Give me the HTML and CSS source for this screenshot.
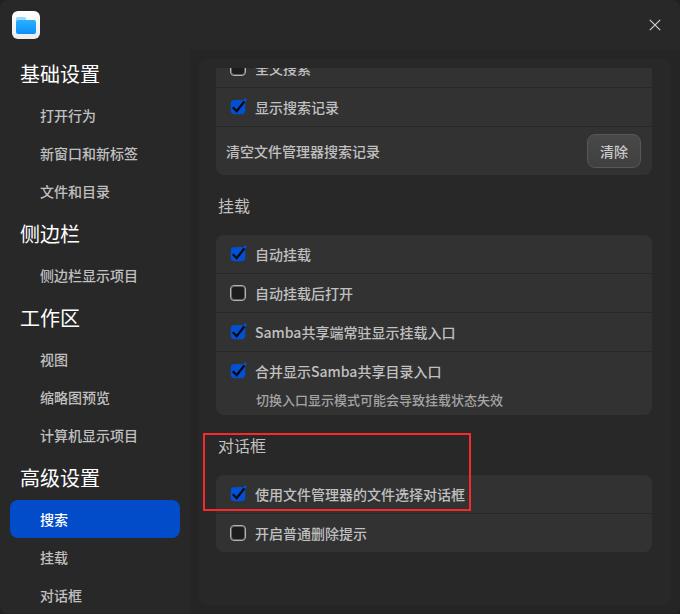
FILE: index.html
```
<!DOCTYPE html>
<html lang="zh-CN">
<head>
    <meta charset="UTF-8">
    <meta name="viewport" content="width=device-width, initial-scale=1.0">
    <title>设置</title>
    <link rel="stylesheet" href="styles.css">
</head>
<body>
    <svg class="sprite" aria-hidden="true">
        <symbol id="tick" viewBox="0 0 18 18">
            <rect x="1.700" y="2" width="14.600" height="14.300" rx="4" fill="#024fcf"/>
            <path d="M14 4.500 16.400 1.700" stroke="#024fcf" stroke-width="2.600" stroke-linecap="round"/>
            <path d="M3.800 9.200 7.700 13.200 15.300 3.500" fill="none" stroke="#02060f" stroke-width="2.200"/>
        </symbol>
    </svg>

    <div class="window">
        <header class="titlebar">
            <svg class="logo" viewBox="0 0 28 28">
                <defs>
                    <linearGradient id="tile" x1="0" y1="0" x2="0" y2="1">
                        <stop offset="0" stop-color="#ffffff"/>
                        <stop offset="1" stop-color="#ececee"/>
                    </linearGradient>
                    <linearGradient id="folder" x1="0" y1="0" x2="0" y2="1">
                        <stop offset="0" stop-color="#2bb0ff"/>
                        <stop offset="1" stop-color="#0a90fb"/>
                    </linearGradient>
                </defs>
                <rect width="28" height="28" rx="6" fill="url(#tile)"/>
                <path d="M4 12V7.500Q4 6 5.500 6H12.500Q14 6 14 7.500V12Z" fill="#94dbff"/>
                <rect x="4" y="9" width="20" height="14" rx="2" fill="url(#folder)"/>
            </svg>
            <button class="close" type="button" aria-label="关闭">
                <svg viewBox="0 0 12 12"><path d="M.8.8 11.200 11.200M11.200.8.8 11.200" stroke="#cfcfcf" stroke-width="1.200"/></svg>
            </button>
        </header>

        <div class="body">
            <nav class="sidebar">
                <h2 class="nav-title">基础设置</h2>
                <a href="#" class="nav-item">打开行为</a>
                <a href="#" class="nav-item">新窗口和新标签</a>
                <a href="#" class="nav-item">文件和目录</a>
                <h2 class="nav-title">侧边栏</h2>
                <a href="#" class="nav-item">侧边栏显示项目</a>
                <h2 class="nav-title">工作区</h2>
                <a href="#" class="nav-item">视图</a>
                <a href="#" class="nav-item">缩略图预览</a>
                <a href="#" class="nav-item">计算机显示项目</a>
                <h2 class="nav-title">高级设置</h2>
                <a href="#" class="nav-item active">搜索</a>
                <a href="#" class="nav-item">挂载</a>
                <a href="#" class="nav-item">对话框</a>
            </nav>

            <main class="content">
                <div class="panel">
                    <div class="scroll">
                        <section class="group">
                            <label class="row">
                                <span class="check"><input type="checkbox"><svg><use href="#tick"/></svg></span>
                                <span>全文搜索</span>
                            </label>
                            <label class="row">
                                <span class="check"><input type="checkbox" checked><svg><use href="#tick"/></svg></span>
                                <span>显示搜索记录</span>
                            </label>
                            <div class="row row-action">
                                <span>清空文件管理器搜索记录</span>
                                <button class="btn" type="button">清除</button>
                            </div>
                        </section>

                        <h3 class="group-title">挂载</h3>
                        <section class="group">
                            <label class="row">
                                <span class="check"><input type="checkbox" checked><svg><use href="#tick"/></svg></span>
                                <span>自动挂载</span>
                            </label>
                            <label class="row">
                                <span class="check"><input type="checkbox"><svg><use href="#tick"/></svg></span>
                                <span>自动挂载后打开</span>
                            </label>
                            <label class="row">
                                <span class="check"><input type="checkbox" checked><svg><use href="#tick"/></svg></span>
                                <span>Samba共享端常驻显示挂载入口</span>
                            </label>
                            <div class="row-note">
                                <label class="row">
                                    <span class="check"><input type="checkbox" checked><svg><use href="#tick"/></svg></span>
                                    <span>合并显示Samba共享目录入口</span>
                                </label>
                                <p class="note">切换入口显示模式可能会导致挂载状态失效</p>
                            </div>
                        </section>

                        <h3 class="group-title">对话框</h3>
                        <section class="group">
                            <label class="row">
                                <span class="check"><input type="checkbox" checked><svg><use href="#tick"/></svg></span>
                                <span>使用文件管理器的文件选择对话框</span>
                            </label>
                            <label class="row">
                                <span class="check"><input type="checkbox"><svg><use href="#tick"/></svg></span>
                                <span>开启普通删除提示</span>
                            </label>
                        </section>
                    </div>
                    <div class="highlight"></div>
                </div>
            </main>
        </div>
    </div>
</body>
</html>
```

FILE: styles.css
```
* {
    box-sizing: border-box;
}
body {
    margin: 0;
    background: #202020;
    color: #c0c0c0;
    font-family: "Noto Sans CJK SC", sans-serif;
    font-size: 14px;
    font-weight: 500;
    line-height: 20px;
}
.sprite {
    display: none;
}
.window {
    display: flex;
    flex-direction: column;
    height: 100vh;
    border-radius: 8px;
    background: #282828;
    overflow: hidden;
}
.titlebar {
    display: flex;
    flex: none;
    align-items: center;
    justify-content: space-between;
    height: 50px;
    padding: 0 12px;
}
.logo {
    width: 28px;
    height: 28px;
}
.close {
    display: flex;
    align-items: center;
    justify-content: center;
    width: 26px;
    height: 26px;
    padding: 0;
    border: 0;
    background: none;
}
.close svg {
    width: 12px;
    height: 12px;
}
.body {
    display: flex;
    flex: 1;
    min-height: 0;
}
.sidebar {
    flex: none;
    width: 190px;
    padding: 0 10px;
    overflow: hidden;
}
.nav-title {
    margin: 0;
    padding: 2px 0 0 10px;
    color: #fff;
    font-size: 20px;
    font-weight: 400;
    line-height: 44px;
}
.nav-item {
    display: block;
    padding-left: 30px;
    border-radius: 8px;
    color: #c0c0c0;
    line-height: 38px;
    text-decoration: none;
}
.nav-item.active {
    background: #024cca;
    color: #fff;
}
.content {
    flex: 1;
    min-width: 0;
    padding: 9px;
    background: #252525;
}
.panel {
    position: relative;
    height: 100%;
    padding: 9px 19px 9px 17px;
    border-radius: 8px;
    background: #282828;
}
/* 列表滚动到底部 */
.scroll {
    display: flex;
    flex-direction: column;
    justify-content: flex-end;
    height: 100%;
    padding-bottom: 44px;
    overflow: hidden;
}
.group {
    display: flex;
    flex: none;
    flex-direction: column;
    gap: 1px;
    border-radius: 8px;
    overflow: hidden;
}
.group-title {
    flex: none;
    margin: 0;
    padding: 18px 2px;
    font-size: 16px;
    font-weight: 400;
    line-height: 24px;
}
.row {
    display: flex;
    align-items: center;
    gap: 8px;
    height: 38px;
    padding: 0 11px 0 13px;
    background: #323232;
}
.row-action {
    justify-content: space-between;
    height: 48px;
    padding-left: 10px;
}
.row-note {
    padding-bottom: 5px;
    background: #323232;
}
.note {
    margin: 0;
    padding-left: 40px;
    color: #a4a4a4;
    font-size: 13px;
}
.check {
    position: relative;
    flex: none;
    width: 18px;
    height: 18px;
}
.check input {
    display: block;
    width: 16px;
    height: 16px;
    margin: 1px;
    border: 1px solid #b4b4b4;
    border-radius: 4px;
    background: #1c1c1c;
    box-shadow: inset 0 0 0 1px #606060;
    appearance: none;
}
.check input:checked {
    opacity: 0;
}
.check svg {
    display: none;
    position: absolute;
    top: 0;
    left: 0;
    width: 18px;
    height: 18px;
    pointer-events: none;
}
.check input:checked + svg {
    display: block;
}
.btn {
    width: 54px;
    height: 34px;
    padding: 0;
    border: 1px solid #575757;
    border-radius: 8px;
    background: linear-gradient(#484848, #404040);
    color: #c8c8c8;
    font: inherit;
}
.highlight {
    position: absolute;
    bottom: 94px;
    left: 4px;
    width: 268px;
    height: 78px;
    border: 2px solid #f62a2a;
    pointer-events: none;
}
```
